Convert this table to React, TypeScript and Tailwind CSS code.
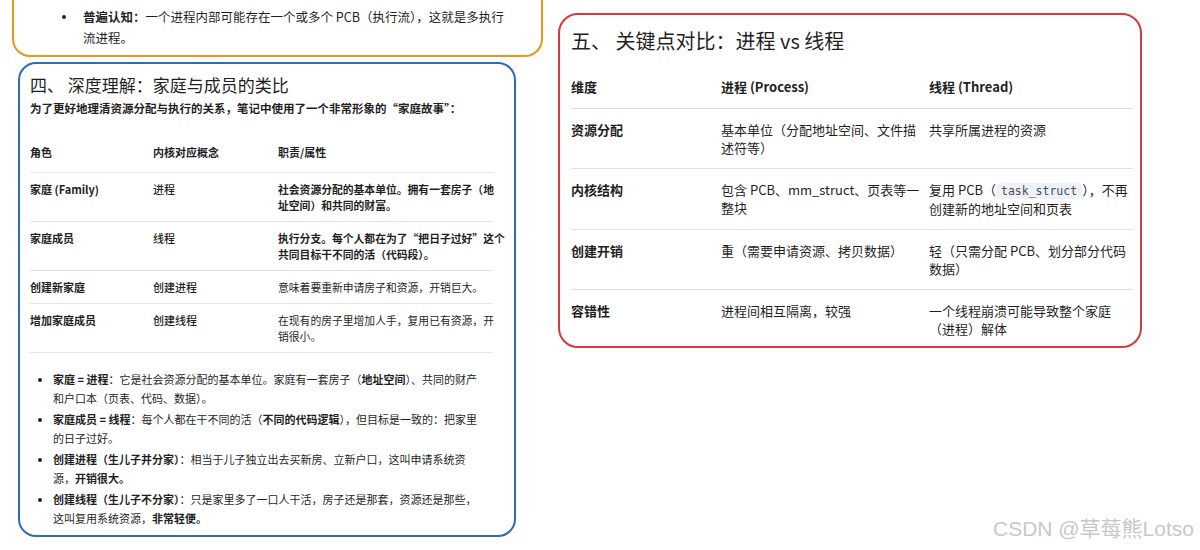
import React from "react";

const LEFT_ROWS = [
  {
    role: "家庭 (Family)",
    concept: "进程",
    duty: (
      <>
        社会资源分配的基本单位。拥有一套房子（地
        <br />
        址空间）和共同的财富。
      </>
    ),
    strong: true,
  },
  {
    role: "家庭成员",
    concept: "线程",
    duty: (
      <>
        执行分支。每个人都在为了“把日子过好”这个
        <br />
        共同目标干不同的活（代码段）。
      </>
    ),
    strong: true,
  },
  { role: "创建新家庭", concept: "创建进程", duty: <>意味着要重新申请房子和资源，开销巨大。</>, strong: false },
  {
    role: "增加家庭成员",
    concept: "创建线程",
    duty: (
      <>
        在现有的房子里增加人手，复用已有资源，开
        <br />
        销很小。
      </>
    ),
    strong: false,
  },
];

const RIGHT_ROWS = [
  {
    dim: "资源分配",
    proc: (
      <>
        基本单位（分配地址空间、文件描
        <br />
        述符等）
      </>
    ),
    thread: <>共享所属进程的资源</>,
  },
  {
    dim: "内核结构",
    proc: (
      <>
        包含 PCB、mm_struct、页表等一
        <br />
        整块
      </>
    ),
    thread: (
      <>
        复用 PCB（
        <code className="font-['DejaVu_Sans_Mono',monospace] text-[11.5px] bg-[#eef1f5] text-[#4a4f57] rounded-[4px] px-[5px] py-[1px]">
          task_struct
        </code>
        ），不再
        <br />
        创建新的地址空间和页表
      </>
    ),
  },
  {
    dim: "创建开销",
    proc: <>重（需要申请资源、拷贝数据）</>,
    thread: (
      <>
        轻（只需分配 PCB、划分部分代码
        <br />
        数据）
      </>
    ),
  },
  {
    dim: "容错性",
    proc: <>进程间相互隔离，较强</>,
    thread: (
      <>
        一个线程崩溃可能导致整个家庭
        <br />
        （进程）解体
      </>
    ),
  },
];

function Dot() {
  return <span className="mt-[8px] w-[4px] h-[4px] rounded-full bg-[#222] shrink-0" />;
}

export default function App() {
  return (
    <div className="relative w-[1200px] h-[550px] overflow-hidden bg-white flex items-start font-['Noto_Sans_CJK_SC','Noto_Sans',sans-serif] text-[#1f1f1f]">
      {/* left column */}
      <div className="ml-[12px] w-[531px] flex flex-col">
        <div className="h-[57px] border-2 border-t-0 border-[#ea961f] rounded-b-[18px] pt-[6px] pl-[48px] flex">
          <span className="mt-[9px] w-[4px] h-[4px] rounded-full bg-[#222] shrink-0" />
          <p className="ml-[17px] text-[12.5px] leading-[21px]">
            <span className="font-bold">普遍认知：</span>一个进程内部可能存在一个或多个 PCB（执行流），这就是多执行
            <br />
            流进程。
          </p>
        </div>

        <div className="mt-[5px] ml-[6px] w-[498px] h-[475px] border-2 border-[#2e6db3] rounded-[18px] px-[10px] pt-[9px]">
          <h2 className="text-[17px] leading-[24px] font-normal">四、 深度理解：家庭与成员的类比</h2>
          <p className="mt-[3px] text-[11.5px] leading-[16px] font-semibold whitespace-nowrap">
            为了更好地理清资源分配与执行的关系，笔记中使用了一个非常形象的“家庭故事”：
          </p>

          <div className="mt-[28px] w-[463px] text-[11px] leading-[16px]">
            <div className="grid grid-cols-[123px_125px_1fr] pb-[12px] border-b border-[#e4e4e4] font-semibold">
              <div>角色</div>
              <div>内核对应概念</div>
              <div>职责/属性</div>
            </div>
            {LEFT_ROWS.map((r) => (
              <div key={r.role} className="grid grid-cols-[123px_125px_1fr] py-[8px] border-b border-[#e4e4e4]">
                <div className="font-semibold">{r.role}</div>
                <div className="font-medium">{r.concept}</div>
                <div className={r.strong ? "font-semibold whitespace-nowrap text-[10.8px]" : "whitespace-nowrap text-[10.8px]"}>
                  {r.duty}
                </div>
              </div>
            ))}
          </div>

          <ul className="mt-[17px] pl-[8px] text-[11px] leading-[19px] flex flex-col gap-[2px] whitespace-nowrap">
            <li className="flex">
              <Dot />
              <p className="ml-[11px]">
                <b>家庭 = 进程</b>：它是社会资源分配的基本单位。家庭有一套房子（<b>地址空间</b>）、共同的财产
                <br />
                和户口本（页表、代码、数据）。
              </p>
            </li>
            <li className="flex">
              <Dot />
              <p className="ml-[11px]">
                <b>家庭成员 = 线程</b>：每个人都在干不同的活（<b>不同的代码逻辑</b>），但目标是一致的：把家里
                <br />
                的日子过好。
              </p>
            </li>
            <li className="flex">
              <Dot />
              <p className="ml-[11px]">
                <b>创建进程（生儿子并分家）</b>：相当于儿子独立出去买新房、立新户口，这叫申请系统资
                <br />
                源，<b>开销很大。</b>
              </p>
            </li>
            <li className="flex">
              <Dot />
              <p className="ml-[11px]">
                <b>创建线程（生儿子不分家）</b>：只是家里多了一口人干活，房子还是那套，资源还是那些，
                <br />
                这叫复用系统资源，<b>非常轻便。</b>
              </p>
            </li>
          </ul>
        </div>
      </div>

      {/* right card */}
      <div className="ml-[15px] mt-[13px] w-[584px] h-[335px] border-2 border-[#d43b3b] rounded-[20px] pl-[11px] pr-[7px] pt-[12px]">
        <h2 className="text-[20px] leading-[28px] font-normal">五、 关键点对比：进程 vs 线程</h2>
        <div className="mt-[23px] text-[13px] leading-[18px]">
          <div className="grid grid-cols-[150px_208px_1fr] pb-[12px] border-b border-[#e2e2e2] font-semibold">
            <div>维度</div>
            <div>进程 (Process)</div>
            <div>线程 (Thread)</div>
          </div>
          {RIGHT_ROWS.map((r) => (
            <div key={r.dim} className="grid grid-cols-[150px_208px_1fr] pt-[12px] pb-[11px] border-b border-[#e2e2e2] last:border-b-0">
              <div className="font-semibold">{r.dim}</div>
              <div>{r.proc}</div>
              <div>{r.thread}</div>
            </div>
          ))}
        </div>
      </div>

      <div className="absolute right-[6px] bottom-[7px] text-[21px] leading-[28px] text-[#c8c8c8] font-['Liberation_Sans','Noto_Sans_CJK_SC',sans-serif]">
        CSDN @草莓熊Lotso
      </div>
    </div>
  );
}
